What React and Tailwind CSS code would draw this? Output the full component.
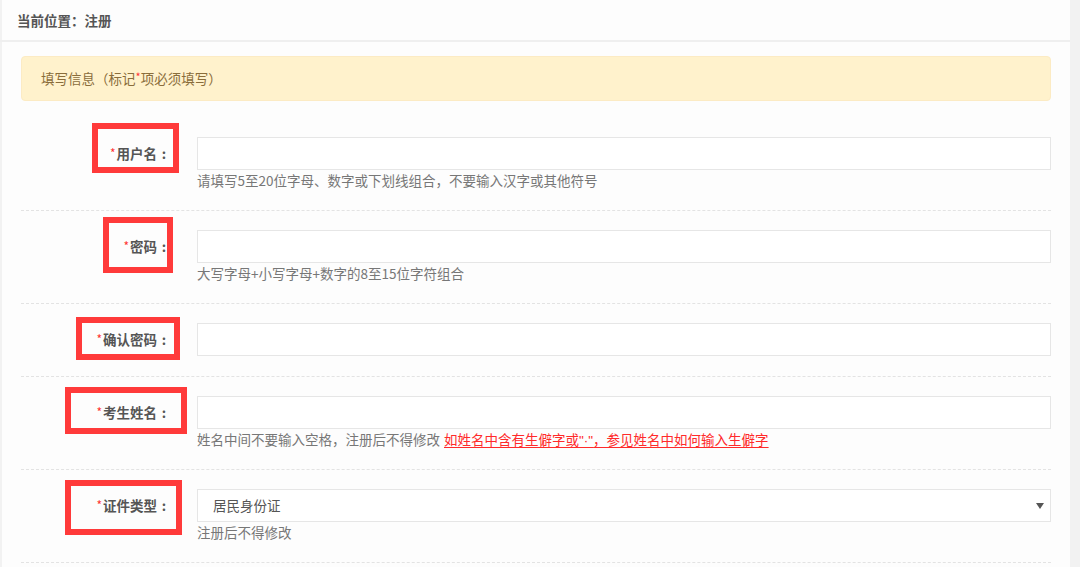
import React from "react";

const font = { fontFamily: '"Noto Sans CJK SC", "Noto Sans", sans-serif' };

const rows = [
  {
    label: "用户名",
    help: "请填写5至20位字母、数字或下划线组合，不要输入汉字或其他符号",
    box: "left-[71px] top-[5px] w-[87px] h-[50px]",
  },
  {
    label: "密码",
    help: "大写字母+小写字母+数字的8至15位字符组合",
    box: "left-[82px] top-[6px] w-[70px] h-[56px]",
  },
  {
    label: "确认密码",
    box: "left-[55px] top-[13px] w-[104px] h-[43px]",
  },
  {
    label: "考生姓名",
    help: "姓名中间不要输入空格，注册后不得修改",
    link: true,
    box: "left-[44px] top-[10px] w-[122px] h-[47px]",
  },
  {
    label: "证件类型",
    help: "注册后不得修改",
    select: "居民身份证",
    box: "left-[44px] top-[10px] w-[117px] h-[55px]",
  },
];

const FormRow = ({ row }) => (
  <div className="relative flex pt-[19px] pb-[20px] border-b border-dashed border-[#e3e3e3]">
    <div className="w-[150px] h-[33px] flex items-center justify-end text-[13.5px] font-bold text-[#555]">
      <span className="text-[#ff3333] text-[12px] font-normal self-start mt-[7px] mr-[1px]">*</span>
      {row.label}
      <span className="inline-block w-[14px] text-center">:</span>
    </div>
    <div className="flex-1 ml-[26px]">
      {row.select ? (
        <div className="h-[33px] bg-white border border-[#e6e6e6] flex items-center justify-between pl-[15px] pr-[6px] text-[13.5px] text-[#555]">
          <span>{row.select}</span>
          <svg width="8" height="6" viewBox="0 0 8 6">
            <path d="M0 0 L8 0 L4 6 Z" fill="#555" />
          </svg>
        </div>
      ) : (
        <div className="h-[33px] bg-white border border-[#e6e6e6]" />
      )}
      {row.help && (
        <div className="h-[20px] leading-[20px] text-[13.5px] text-[#777] whitespace-nowrap">
          {row.help}
          {row.link && (
            <a href="#" className="ml-[4px] text-[#ff2a2a] underline underline-offset-2">
              如姓名中含有生僻字或
              <span style={{ fontFamily: '"Liberation Sans", sans-serif' }}>"·"</span>
              ，参见姓名中如何输入生僻字
            </a>
          )}
        </div>
      )}
    </div>
    <div className={`absolute border-[6px] border-[#ff3a3a] pointer-events-none ${row.box}`} />
  </div>
);

export default function App() {
  return (
    <div className="w-[1080px] h-[567px] overflow-hidden bg-[#f2f2f2] flex" style={font}>
      <div className="ml-[2px] w-[1068px] h-full bg-[#fdfdfd] flex flex-col">
        <div className="h-[42px] shrink-0 border-b-2 border-[#efefef] flex items-center -ml-[2px] pl-[17px] text-[13.5px] font-bold text-[#555]">
          当前位置：注册
        </div>
        <div className="px-[19px] pt-[14px]">
          <div className="h-[45px] rounded-[4px] bg-[#fff2cc] border border-[#fcebc4] flex items-center pl-[19px] text-[13.5px] text-[#8a6d3b]">
            填写信息（标记
            <span className="text-[#ff3333] text-[11px] self-start mt-[11px]">*</span>
            项必须填写）
          </div>
          <div className="mt-[17px]">
            {rows.map((r) => (
              <FormRow key={r.label} row={r} />
            ))}
          </div>
        </div>
      </div>
    </div>
  );
}
